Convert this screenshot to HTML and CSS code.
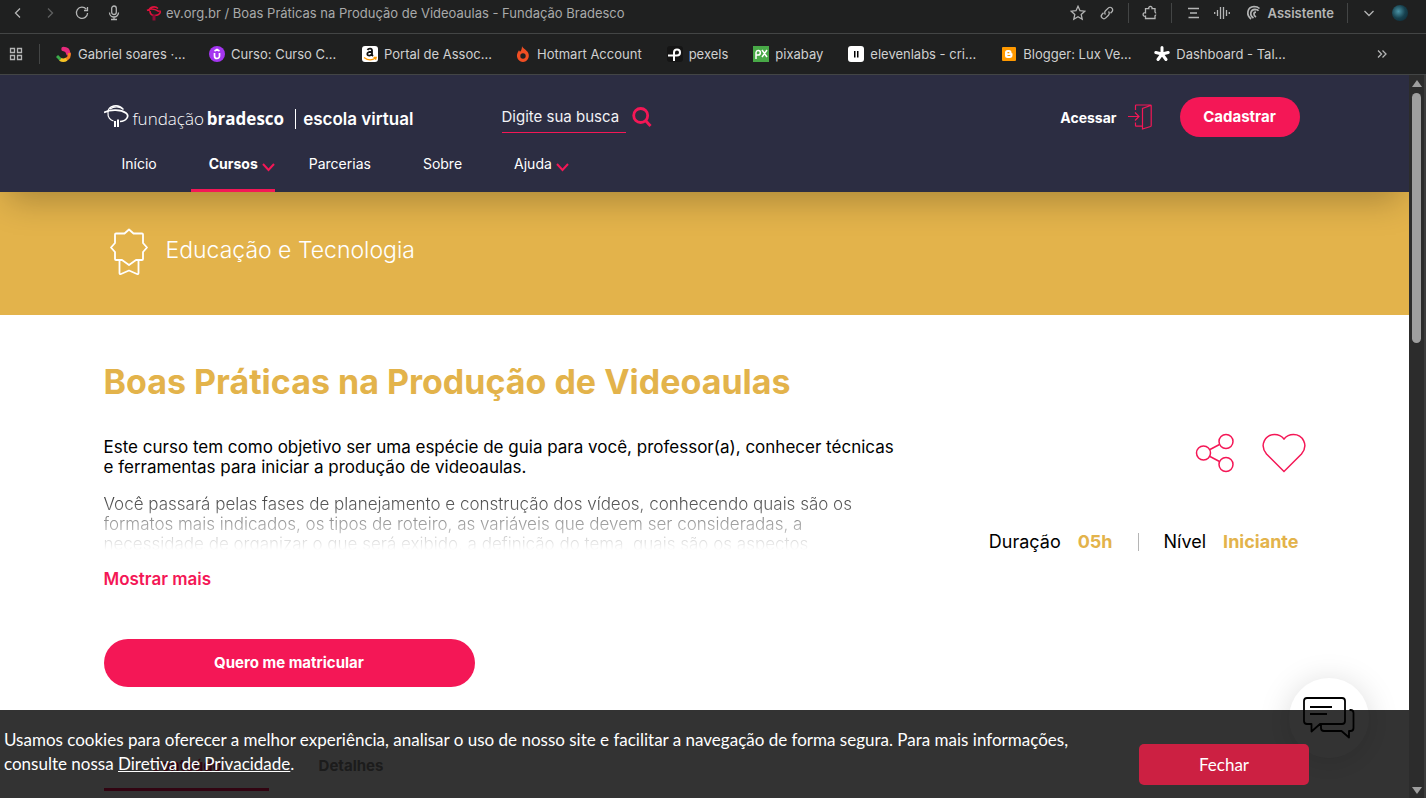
FILE: index.html
```html
<!DOCTYPE html>
<html lang="pt-br">
<head>
  <meta charset="UTF-8">
  <meta name="viewport" content="width=device-width, initial-scale=1.0">
  <title>Boas Práticas na Produção de Videoaulas - Fundação Bradesco</title>
  <link rel="stylesheet" href="styles.css">
</head>
<body>
  <!-- Barra de endereço -->
  <div class="toolbar">
    <button class="tool" aria-label="Voltar"><svg width="16" height="16" viewBox="0 0 16 16"><path d="M10 3.500 5.500 8l4.500 4.500"/></svg></button>
    <button class="tool dim" aria-label="Avançar"><svg width="16" height="16" viewBox="0 0 16 16"><path d="M6 3.500 10.500 8 6 12.500"/></svg></button>
    <button class="tool" aria-label="Recarregar"><svg width="16" height="16" viewBox="0 0 16 16"><path d="M12.300 4.200A5.600 5.600 0 1 0 13.600 8M13.500 2v3.500H10"/></svg></button>
    <button class="tool" aria-label="Pesquisa por voz"><svg width="16" height="16" viewBox="0 0 16 16"><rect x="5.700" y="1" width="4.600" height="8.500" rx="2.300"/><path d="M3.500 7.500a4.500 4.500 0 0 0 9 0M8 12v2.500M5 14.500h6"/></svg></button>
    <svg class="site-icon" width="16" height="16" viewBox="0 0 16 16"><path d="M1 5.500C4 3.500 9 4 13 6.500M3 6C3 2 9 .500 12 3.500M4 6c0 3 1.500 4 3.500 4.500M9 10.500c4 0 6.500-3 4.500-5" fill="none" stroke="#e0113c" stroke-width="1.600"/><path d="M6.500 9.500h3v6h-3z" fill="#8d0d35"/></svg>
    <input class="address" type="text" aria-label="Endereço" value="ev.org.br / Boas Práticas na Produção de Videoaulas - Fundação Bradesco">
    <div class="tools">
      <button class="tool" aria-label="Favoritar"><svg width="16" height="16" viewBox="0 0 16 16"><path d="m8 1.300 2 4.400 4.800.500-3.600 3.200 1 4.800L8 11.800l-4.200 2.400 1-4.800L1.200 6.200 6 5.700z"/></svg></button>
      <button class="tool" aria-label="Copiar link"><svg width="16" height="16" viewBox="0 0 16 16"><path d="M6.500 9.500a2.600 2.600 0 0 1 0-3.700l2.700-2.700a2.600 2.600 0 0 1 3.700 3.700l-1.400 1.400M9.500 6.500a2.600 2.600 0 0 1 0 3.700l-2.700 2.700a2.600 2.600 0 0 1-3.700-3.700l1.400-1.400"/></svg></button>
      <span class="split"></span>
      <button class="tool" aria-label="Extensões"><svg width="16" height="16" viewBox="0 0 16 16"><path d="M3.500 6.500V3.700h3.300a1.700 1.700 0 1 1 3.200 0h3v3.300a1 1 0 0 0 1.200.800M14.200 10.200a1 1 0 0 0-1.200.800v2.500H3.500v-2.300a1.800 1.800 0 1 1 0-3.400V6.500"/></svg></button>
      <span class="split"></span>
      <button class="tool" aria-label="Modo leitura"><svg width="16" height="16" viewBox="0 0 16 16"><path d="M3 3.500h11M5 8h7M3.500 12.500H14"/></svg></button>
      <button class="tool" aria-label="Ouvir página"><svg width="16" height="16" viewBox="0 0 16 16"><path d="M.700 7v2M3.500 5v6M6.500 2v12M9.500 2v12M12.500 5v6M15.300 7v2"/></svg></button>
      <button class="tool assistant"><svg width="16" height="16" viewBox="0 0 16 16"><path d="M5 14C0 10 1 2 8 1.500c3 0 4.500 1 5.500 2M7.500 13C3 10 4.500 4.500 9 4.300c2 0 3 .700 3.500 1.500M10 12C7 10 7.500 7.200 10 7.200" stroke-width="1.700"/></svg>Assistente</button>
      <span class="split"></span>
      <button class="tool" aria-label="Mais opções"><svg width="16" height="16" viewBox="0 0 16 16"><path d="M3.500 6 8 10.500 12.500 6"/></svg></button>
      <button class="tool profile" aria-label="Perfil"></button>
    </div>
  </div>

  <!-- Favoritos -->
  <div class="bookmarks">
    <button class="tool" aria-label="Aplicativos"><svg width="14" height="14" viewBox="0 0 14 14"><path d="M1.500 1.500h4v4h-4zM8.500 1.500h4v4h-4zM1.500 8.500h4v4h-4zM8.500 8.500h4v4h-4z"/></svg></button>
    <span class="split"></span>
    <nav class="bookmark-list" aria-label="Favoritos">
      <a class="cut" href="#"><svg width="16" height="16" viewBox="0 0 16 16" fill="none"><path d="M7.500 3c3 0 4.500 2 4.800 4.500" stroke="#e62a7c" stroke-width="4.500" stroke-linecap="round"/><path d="M13.300 7c.500 3-1 5.500-3.500 6.500" stroke="#f58220" stroke-width="3"/><path d="M10.500 13.200c-2 1.200-4.500 1.200-6.500 0" stroke="#f6c324" stroke-width="3.500"/><path d="M4.500 13.500 1 10" stroke="#3bab4a" stroke-width="3"/></svg><span>Gabriel soares ·…</span></a>
      <a class="cut" href="#"><svg width="16" height="16" viewBox="0 0 16 16"><circle cx="8" cy="8" r="8" fill="#a435f0"/><path d="M5.500 7v3a2.500 2.500 0 0 0 5 0V7M5.500 5 8 3.500 10.500 5" fill="none" stroke="#fff" stroke-width="1.700"/></svg><span>Curso: Curso C…</span></a>
      <a class="cut" href="#"><svg width="16" height="16" viewBox="0 0 16 16"><rect width="16" height="16" rx="3" fill="#fff"/><path d="M5.500 4C6.500 2 10 2 10 4.500V9l1 1M10 5.800C7 5.600 5.300 6.500 5.300 8c0 2.500 4.200 2 4.700-.500" fill="none" stroke="#111" stroke-width="1.800"/><path d="M2 11.500c4 3 8 3 11.500.500M11.500 11.300h2.700l-.700 2.500" fill="none" stroke="#f90" stroke-width="1.300"/></svg><span>Portal de Assoc…</span></a>
      <a href="#"><svg width="16" height="16" viewBox="0 0 16 16"><path d="M7 0c.300 2 4.500 4 6 6.500C15.500 11 12 16 8 16S.500 11.500 2.500 7c.500-1.200 1-2 1.500-2.700l1 1.500C6.500 4.500 7 2.500 7 0z" fill="#f04e23"/><circle cx="8" cy="10" r="2.700" fill="#1f2020"/></svg><span>Hotmart Account</span></a>
      <a href="#"><svg width="16" height="16" viewBox="0 0 16 16"><rect width="16" height="16" rx="3" fill="#151515"/><path d="M1 9.500h9a3 3 0 1 0-3-3V15" fill="none" stroke="#fff" stroke-width="2"/></svg><span>pexels</span></a>
      <a href="#"><svg width="16" height="16" viewBox="0 0 16 16"><rect width="16" height="16" fill="#48a947"/><path d="M3 13V6.500a2.200 2.200 0 1 1 2.200 2.500H3M9 4l5 7M14 4 9 11" fill="none" stroke="#fff" stroke-width="1.500"/></svg><span>pixabay</span></a>
      <a class="cut" href="#"><svg width="16" height="16" viewBox="0 0 16 16"><rect width="16" height="16" rx="3" fill="#fff"/><path d="M6 5h1.500v6.500H6zM9 5h1.500v6.500H9z" fill="#000"/></svg><span>elevenlabs - cri…</span></a>
      <a class="cut" href="#"><svg width="16" height="16" viewBox="0 0 16 16"><rect x="1" y="1" width="14" height="14" rx="1" fill="#f90"/><path d="M6.500 4H8a2.500 2.500 0 0 1 2.500 2.500c0 .700.500.700 1 1v1.800A2.700 2.700 0 0 1 8.800 12H6.500A2.500 2.500 0 0 1 4 9.500v-3A2.500 2.500 0 0 1 6.500 4z" fill="#fff"/><path d="M6.500 6.700h1.800M6.500 9.500h2.800" stroke="#f90" stroke-width="1.200"/></svg><span>Blogger: Lux Ve…</span></a>
      <a class="cut" href="#"><svg width="16" height="16" viewBox="0 0 16 16"><path d="M8 8V1.500M8 8l6.200-1.500M8 8l4 5.500M8 8l-4 5.500M8 8 1.800 6.500" stroke="#fff" stroke-width="3" stroke-linecap="round"/></svg><span>Dashboard - Tal…</span></a>
    </nav>
    <button class="tool more" aria-label="Mais favoritos"><svg width="14" height="14" viewBox="0 0 14 14"><path d="m3 3.500 3.500 3.500L3 10.500M7.500 3.500 11 7l-3.500 3.500"/></svg></button>
  </div>

  <div class="window">
    <div class="page">
      <!-- Cabeçalho do site -->
      <header class="header">
        <div class="container">
          <div class="header-top">
            <a class="logo" href="#">
              <svg width="26" height="26" viewBox="0 0 26 26" fill="none" stroke="#fff"><path d="M0 8.500C7 5 17 5.500 22 9c4 3 0 8.500-6 8.500" stroke-width="1.700"/><path d="M4 8.500C4 1.500 14-1 19.500 5.500M4 8.500c-.500 5 2.500 8 5.500 8.500M6 5C10 2 16 2 19.500 5.500" stroke-width="1.200"/><path d="M11 17v6M14 15.500V23" stroke-width="2"/></svg>
              <span class="logo-light">fundação</span>
              <span class="logo-bold">bradesco</span>
              <span class="logo-school">escola virtual</span>
            </a>
            <form class="search">
              <input type="text" placeholder="Digite sua busca" aria-label="Digite sua busca">
              <button type="button" aria-label="Buscar"><svg width="20" height="20" viewBox="0 0 20 20" fill="none" stroke="#f41756" stroke-width="2.800"><circle cx="8.700" cy="8.500" r="7"/><path d="m13.500 13.500 5 5.500"/></svg></button>
            </form>
            <div class="account">
              <a class="login" href="#">Acessar
                <svg width="24" height="26" viewBox="0 0 24 26" fill="none" stroke="#f41756" stroke-width="1.200"><path d="M0 12.500h11M7 8.500l4 4-4 4M7.500 6V1.700q0-.700.700-.700H22.500q.700 0 .700.700V21.500q0 .700-.700 1L14.500 25V4.500l8-3M7.500 18.500v3q0 .700.700.700h6"/></svg>
              </a>
              <button class="btn btn-signup">Cadastrar</button>
            </div>
          </div>
          <nav class="menu">
            <a href="#">Início</a>
            <a class="active" href="#">Cursos <svg width="13" height="9" viewBox="0 0 13 9"><path d="m1 1 5.500 6L12 1"/></svg></a>
            <a href="#">Parcerias</a>
            <a href="#">Sobre</a>
            <a href="#">Ajuda <svg width="13" height="9" viewBox="0 0 13 9"><path d="m1 1 5.500 6L12 1"/></svg></a>
          </nav>
        </div>
      </header>

      <!-- Categoria do curso -->
      <div class="banner">
        <div class="container">
          <svg width="38" height="48" viewBox="0 0 38 48" fill="none" stroke="#fff" stroke-width="1.800" stroke-linejoin="round"><path d="m19 1.500 4.500 4H32q1 0 1 1v8.500l4 4.500-4 4.500V31q0 1-1 1h-6l-7 5-7-5H6q-1 0-1-1v-7L1 19.500 5 15V6.500q0-1 1-1h8.500z"/><path d="M9.500 32.500V45q0 1.500 1.500 1l8-3.500 8 3.500q1.500.500 1.500-1V32.500"/></svg>
          <span>Educação e Tecnologia</span>
        </div>
      </div>

      <!-- Detalhes do curso -->
      <main class="container course">
        <h1>Boas Práticas na Produção de Videoaulas</h1>
        <div class="course-info">
          <div class="description">
            <p>Este curso tem como objetivo ser uma espécie de guia para você, professor(a), conhecer técnicas<br>e ferramentas para iniciar a produção de videoaulas.</p>
            <div class="faded">
              <p>Você passará pelas fases de planejamento e construção dos vídeos, conhecendo quais são os<br>formatos mais indicados, os tipos de roteiro, as variáveis que devem ser consideradas, a<br>necessidade de organizar o que será exibido, a definição do tema, quais são os aspectos</p>
            </div>
            <a class="show-more" href="#">Mostrar mais</a>
          </div>
          <div class="aside">
            <div class="actions">
              <button aria-label="Compartilhar"><svg width="40" height="40" viewBox="0 0 40 40"><circle cx="8.500" cy="20" r="7"/><circle cx="31" cy="8.500" r="7"/><circle cx="31" cy="31.500" r="7"/><path d="m15 16.500 9.500-5M15 23.500l9.500 5"/></svg></button>
              <button aria-label="Favoritar curso"><svg width="44" height="40" viewBox="0 0 44 40"><path d="M22 38.500 4.500 21C-3 12 3.500 1.500 12.500 1.500 17 1.500 20 3.500 22 6c2-2.500 5-4.500 9.500-4.500 9 0 15.500 10.500 8 19.500z"/></svg></button>
            </div>
            <div class="meta">
              <span>Duração</span><strong>05h</strong>
              <span class="meta-split"></span>
              <span>Nível</span><strong>Iniciante</strong>
            </div>
          </div>
        </div>
        <button class="btn btn-enroll">Quero me matricular</button>
        <nav class="tabs">
          <a class="current" href="#">Conteúdo</a>
          <a href="#">Detalhes</a>
        </nav>
      </main>

      <button class="chat" aria-label="Abrir chat"><svg width="52" height="42" viewBox="0 0 52 42"><path d="M4 1h35q3 0 3 3v20q0 3-3 3H17l-8.500 7.500V27H4q-3 0-3-3V4q0-3 3-3zM7 10h22M7 17h17M46.500 13h1q3 0 3 3v15q0 3-3 3H46v6.500L38.500 34H21q-3 0-3-3v-4"/></svg></button>

      <!-- Aviso de cookies -->
      <div class="cookies">
        <p>Usamos cookies para oferecer a melhor experiência, analisar o uso de nosso site e facilitar a navegação de forma segura. Para mais informações,<br>consulte nossa <a href="#">Diretiva de Privacidade</a>.</p>
        <button>Fechar</button>
      </div>
    </div>

    <!-- Barra de rolagem -->
    <div class="scrollbar">
      <span class="arrow-up"></span>
      <span class="thumb"></span>
      <span class="arrow-down"></span>
    </div>
  </div>
</body>
</html>
```
FILE: styles.css
```css
* {
  box-sizing: border-box;
}

body {
  margin: 0;
  height: 100vh;
  display: flex;
  flex-direction: column;
  overflow: hidden;
  background: #1f2020;
  font-family: Inter, sans-serif;
}

button {
  border: 0;
  padding: 0;
  background: none;
  color: inherit;
  font-family: inherit;
  cursor: pointer;
}

a {
  color: inherit;
  text-decoration: none;
}

svg {
  display: block;
  flex: none;
}

/* Navegador */
.toolbar,
.bookmarks {
  display: flex;
  align-items: center;
  flex: none;
  border-bottom: 1px solid #434545;
}

.toolbar {
  height: 34px;
  padding: 0 18px 7px 10px;
  gap: 16px;
  color: #b4b5b5;
}

.tool {
  color: #b4b5b5;
}

.tool svg {
  fill: none;
  stroke: currentColor;
  stroke-width: 1.3;
}

.tool.dim {
  color: #5f6060;
}

.site-icon {
  margin-left: 8px;
}

.address {
  flex: 1;
  min-width: 0;
  margin-left: -12px;
  padding: 0;
  border: 0;
  background: none;
  color: #a9aaaa;
  font: 13px Inter, sans-serif;
}

.tools {
  display: flex;
  align-items: center;
  gap: 13px;
}

.split {
  width: 1px;
  height: 20px;
  background: #434545;
}

.assistant {
  display: flex;
  align-items: center;
  gap: 6px;
  margin-left: 3px;
  font-size: 13px;
  font-weight: 600;
}

.profile {
  width: 16px;
  height: 16px;
  margin-left: 2px;
  border-radius: 50%;
  background: radial-gradient(circle at 40% 40%, #4a93a5, #17414e 50%, #0b2430);
}

.bookmarks {
  height: 41px;
  padding: 0 37px 0 9px;
  gap: 16px;
  color: #d0d0d0;
  font-size: 13px;
}

.bookmark-list {
  flex: 1;
  display: flex;
  gap: 25px;
  white-space: nowrap;
}

.bookmark-list a {
  display: flex;
  align-items: center;
  gap: 6px;
}

.bookmark-list .cut {
  width: 128px;
}

.window {
  flex: 1;
  min-height: 0;
  display: flex;
}

.page {
  position: relative;
  flex: 1;
  min-width: 0;
  overflow: hidden;
  background: #fff;
}

.container {
  max-width: 1202px;
  margin: 0 auto;
}

/* Cabeçalho */
.header {
  position: relative;
  z-index: 1;
  background: #2c2d42;
  color: #fff;
  box-shadow: 0 16px 32px -8px rgba(0, 0, 0, 0.25);
}

.header-top {
  display: flex;
  align-items: center;
  height: 84px;
}

.logo {
  display: flex;
  align-items: center;
  gap: 3px;
  width: 398px;
  font-family: "Open Sans", sans-serif;
  font-size: 17px;
}

.logo span {
  padding-top: 3px;
}

.logo-light {
  font-weight: 300;
}

.logo-bold {
  font-weight: 700;
}

.logo .logo-school {
  margin: 3px 0 0 8px;
  padding: 0 0 0 7px;
  border-left: 1px solid #fff;
  font-family: Inter, sans-serif;
  font-weight: 600;
  line-height: 20px;
}

.search {
  display: flex;
  align-items: center;
  gap: 6px;
}

.search input {
  width: 124px;
  height: 32px;
  padding: 0;
  border: 0;
  border-bottom: 1px solid #f41756;
  background: none;
  color: #fff;
  font: 15px Inter, sans-serif;
}

.search input::placeholder {
  color: #f2f2f5;
  opacity: 1;
}

.account {
  display: flex;
  align-items: center;
  gap: 28px;
  margin-left: auto;
  padding-right: 6px;
  font-size: 14px;
  font-weight: 700;
}

.login {
  display: flex;
  align-items: center;
  gap: 11px;
}

.btn {
  border-radius: 24px;
  background: #f41756;
  color: #fff;
  font-size: 15px;
  font-weight: 700;
  line-height: 20px;
}

.btn-signup {
  width: 120px;
  height: 40px;
}

.menu {
  display: flex;
  gap: 16px;
  height: 33px;
  font-size: 14px;
}

.menu a {
  display: flex;
  gap: 4px;
  height: 33px;
  padding: 0 18px;
  line-height: 10px;
}

.menu .active {
  padding-right: 0;
  font-weight: 700;
  border-bottom: 3px solid #f41756;
}

.menu svg {
  margin-top: 4px;
  fill: none;
  stroke: #f41756;
  stroke-width: 2;
}

/* Categoria */
.banner {
  padding: 36px 0 39px;
  background: #e3b34b;
  color: #fff;
}

.banner .container {
  display: flex;
  align-items: center;
  gap: 18px;
  padding-left: 6px;
  font-size: 23px;
  font-weight: 300;
}

.banner span {
  padding-bottom: 4px;
}

/* Curso */
.course h1 {
  margin: 46px 0 34px;
  color: #e3b34b;
  font-size: 34px;
  font-weight: 700;
  line-height: 42px;
}

.course-info {
  display: flex;
  justify-content: space-between;
}

.description {
  color: #000;
  font-size: 17px;
  line-height: 20px;
  white-space: nowrap;
}

.description p {
  margin: 0;
}

.faded {
  height: 56px;
  margin-top: 17px;
  overflow: hidden;
  color: #333;
  font-weight: 300;
  -webkit-mask-image: linear-gradient(#000, transparent);
  mask-image: linear-gradient(#000, transparent);
}

.show-more {
  display: block;
  margin-top: 19px;
  color: #f41756;
  font-weight: 600;
}

.aside {
  display: flex;
  flex-direction: column;
  align-items: flex-end;
}

.actions {
  display: flex;
  gap: 27px;
  margin-top: -4px;
}

.actions svg {
  fill: none;
  stroke: #f41756;
  stroke-width: 1.5;
}

.meta {
  display: flex;
  align-items: center;
  gap: 17px;
  margin-top: 59px;
  padding-right: 7px;
  font-size: 18px;
  line-height: 20px;
}

.meta strong {
  color: #e3b34b;
}

.meta-split {
  width: 1px;
  height: 18px;
  margin: 0 8px;
  background: #b5b5b5;
}

.btn-enroll {
  display: block;
  width: 371px;
  height: 48px;
  margin-top: 50px;
}

.tabs {
  display: flex;
  margin-top: 66px;
  color: #8c8c8c;
  font-size: 15px;
  font-weight: 700;
  line-height: 26px;
}

.tabs a {
  width: 165px;
  height: 38px;
  text-align: center;
}

.tabs .current {
  color: #f41756;
  border-bottom: 3px solid #f41756;
}

/* Chat flutuante */
.chat {
  position: absolute;
  right: 40px;
  bottom: 40px;
  display: flex;
  align-items: center;
  justify-content: center;
  width: 80px;
  height: 80px;
  border-radius: 50%;
  background: #fff;
  box-shadow: 0 4px 32px rgba(0, 0, 0, 0.15);
}

.chat svg {
  fill: none;
  stroke: #000;
  stroke-width: 1.8;
  stroke-linejoin: round;
}

/* Cookies */
.cookies {
  position: absolute;
  left: 0;
  right: 0;
  bottom: 0;
  display: flex;
  justify-content: space-between;
  padding: 18px 100px 13px 4px;
  background: rgba(0, 0, 0, 0.8);
  color: #fff;
  font-family: Lato, sans-serif;
  font-size: 17px;
}

.cookies p {
  margin: 0 0 9px;
  line-height: 24px;
  white-space: nowrap;
}

.cookies a {
  text-decoration: underline;
}

.cookies button {
  align-self: flex-end;
  width: 170px;
  height: 41px;
  border-radius: 5px;
  background: #cc2042;
  font-size: 17px;
}

/* Rolagem */
.scrollbar {
  display: flex;
  flex-direction: column;
  align-items: center;
  width: 17px;
  padding: 5px 0 4px;
  background: #2c2c2c;
  border-right: 2px solid #3c3c3c;
}

.arrow-up,
.arrow-down {
  border: 5px solid transparent;
}

.arrow-up {
  border-top: 0;
  border-bottom: 7px solid #9f9f9f;
}

.arrow-down {
  margin-top: auto;
  border-bottom: 0;
  border-top: 7px solid #9f9f9f;
}

.thumb {
  width: 9px;
  height: 35%;
  margin-top: 6px;
  border-radius: 5px;
  background: #9f9f9f;
}
```
